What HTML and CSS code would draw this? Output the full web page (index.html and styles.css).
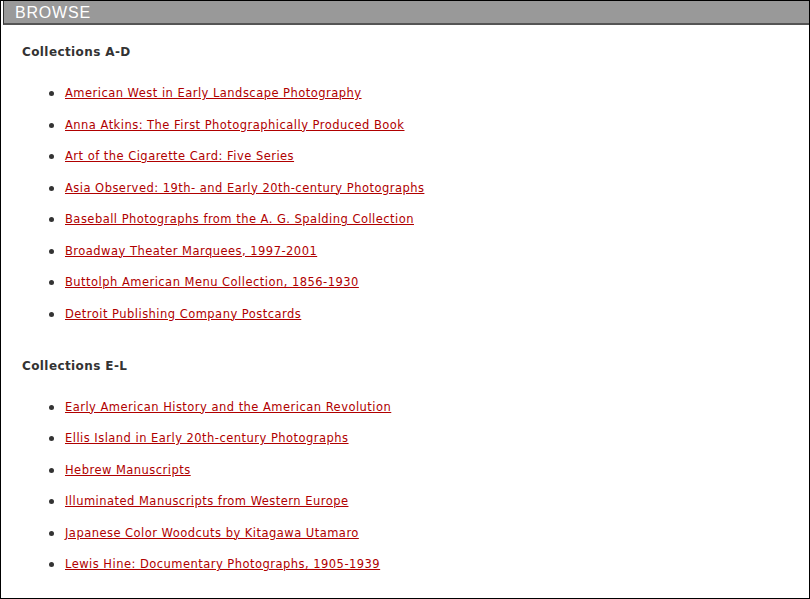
FILE: index.html
```html
<!DOCTYPE html>
<html>
<head>
<meta charset="utf-8">
<link rel="stylesheet" href="styles.css">
</head>
<body>
<div class="frame">
  <div class="bar">BROWSE</div>
  <div class="content">
    <section class="group">
      <h3 class="group-title">Collections A-D</h3>
      <ul class="links">
        <li><a href="#">American West in Early Landscape Photography</a></li>
        <li><a href="#">Anna Atkins: The First Photographically Produced Book</a></li>
        <li><a href="#">Art of the Cigarette Card: Five Series</a></li>
        <li><a href="#">Asia Observed: 19th- and Early 20th-century Photographs</a></li>
        <li><a href="#">Baseball Photographs from the A. G. Spalding Collection</a></li>
        <li><a href="#">Broadway Theater Marquees, 1997-2001</a></li>
        <li><a href="#">Buttolph American Menu Collection, 1856-1930</a></li>
        <li><a href="#">Detroit Publishing Company Postcards</a></li>
      </ul>
    </section>
    <section class="group group-next">
      <h3 class="group-title">Collections E-L</h3>
      <ul class="links">
        <li><a href="#">Early American History and the American Revolution</a></li>
        <li><a href="#">Ellis Island in Early 20th-century Photographs</a></li>
        <li><a href="#">Hebrew Manuscripts</a></li>
        <li><a href="#">Illuminated Manuscripts from Western Europe</a></li>
        <li><a href="#">Japanese Color Woodcuts by Kitagawa Utamaro</a></li>
        <li><a href="#">Lewis Hine: Documentary Photographs, 1905-1939</a></li>
      </ul>
    </section>
  </div>
</div>
</body>
</html>
```

FILE: styles.css
```css
html, body {
  margin: 0;
  padding: 0;
  background: #fff;
}
.frame {
  box-sizing: border-box;
  width: 810px;
  height: 599px;
  border: 1px solid #000;
  overflow: hidden;
}
.bar {
  margin-left: 2px;
  height: 22px;
  background: #999;
  border-left: 1px solid #333;
  border-bottom: 2px solid #555;
  color: #fff;
  font-family: "Liberation Sans", Arial, sans-serif;
  font-size: 16px;
  letter-spacing: 0.8px;
  line-height: 23px;
  padding-left: 11px;
}
.content {
  padding: 19px 0 0 21px;
  font-family: "DejaVu Sans", Verdana, sans-serif;
}
.group-title {
  margin: 0;
  font-size: 12px;
  letter-spacing: 0.4px;
  line-height: 16px;
  font-weight: bold;
  color: #333;
}
.group-next {
  margin-top: 28.5px;
}
.links {
  margin: 17px 0 0;
  padding: 0 0 0 27px;
  list-style: none;
}
.links li {
  font-size: 11.5px;
  letter-spacing: 0.47px;
  line-height: 16px;
  padding: 8px 0 7.5px;
}
.links li::before {
  content: "";
  display: inline-block;
  width: 5px;
  height: 5px;
  border-radius: 50%;
  background: #333;
  margin-right: 11px;
  vertical-align: 1px;
}
.links a {
  color: #b00000;
  text-decoration: underline;
}
```
